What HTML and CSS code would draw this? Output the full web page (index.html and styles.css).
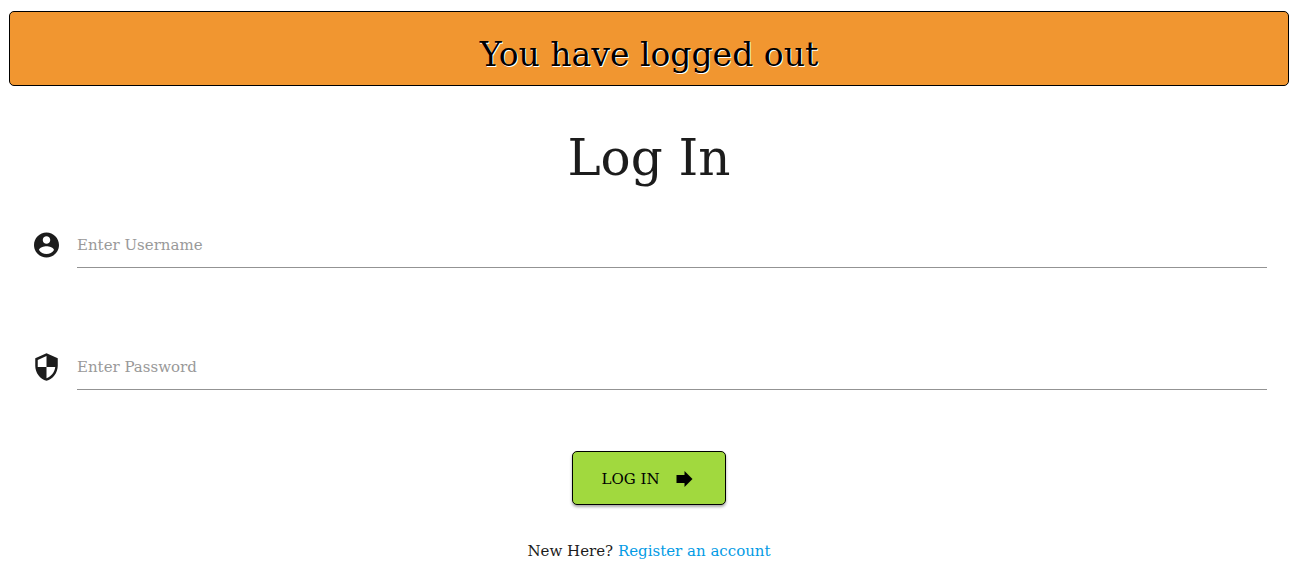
FILE: index.html
```html
<!DOCTYPE html>
<html lang="en">
<head>
  <meta charset="utf-8">
  <meta name="viewport" content="width=device-width, initial-scale=1">
  <title>Log In</title>
  <link rel="stylesheet" href="styles.css">
</head>
<body>
  <div class="flash" role="status">You have logged out</div>
  <main>
    <h1 class="title">Log In</h1>
    <form class="form">
      <div class="field">
        <label for="username" aria-label="Username">
          <svg class="field-icon" viewBox="0 0 24 24" aria-hidden="true"><path d="M12 2C6.48 2 2 6.48 2 12s4.48 10 10 10 10-4.48 10-10S17.52 2 12 2zm0 3c1.66 0 3 1.34 3 3s-1.34 3-3 3-3-1.34-3-3 1.34-3 3-3zm0 14.2c-2.5 0-4.71-1.28-6-3.22.03-1.99 4-3.08 6-3.08 1.99 0 5.97 1.09 6 3.08-1.29 1.94-3.5 3.22-6 3.22z"/></svg>
        </label>
        <input class="field-input" id="username" type="text" placeholder="Enter Username">
      </div>
      <div class="field">
        <label for="password" aria-label="Password">
          <svg class="field-icon" viewBox="0 0 24 24" aria-hidden="true"><path d="M12 1L3 5v6c0 5.55 3.84 10.74 9 12 5.16-1.26 9-6.45 9-12V5l-9-4zm0 10.99h7c-.53 4.12-3.28 7.79-7 8.94V12H5V6.3l7-3.11v8.8z"/></svg>
        </label>
        <input class="field-input" id="password" type="password" placeholder="Enter Password">
      </div>
      <button class="submit" type="button">
        <span>LOG IN</span>
        <svg class="submit-icon" viewBox="0 0 16 16" aria-hidden="true"><path d="M0 4h8V0l8 8-8 8v-4H0z"/></svg>
      </button>
    </form>
    <p class="register">New Here? <a class="link" href="#">Register an account</a></p>
  </main>
</body>
</html>
```

FILE: styles.css
```css
* {
  box-sizing: border-box;
}

body {
  margin: 0;
  padding: 11px 9px 0;
  background: #fff;
  color: #1c1c1c;
  font-family: "DejaVu Serif", serif;
  font-size: 15px;
  line-height: 24px;
}

.flash {
  padding: 19px 16px 6px;
  border: 1px solid #000;
  border-radius: 5px;
  background: #f19630;
  color: #000;
  font-size: 33px;
  line-height: 48px;
  text-align: center;
  text-shadow: 1px 1px 0 #fff;
}

.title {
  margin: 36px 0 0;
  font-size: 50px;
  font-weight: 400;
  line-height: 72px;
  text-align: center;
}

.form {
  display: flex;
  flex-direction: column;
  padding: 28px 22px 0;
}

.field {
  display: flex;
  align-items: center;
  gap: 15px;
  margin-bottom: 76px;
}

.field label {
  display: flex;
}

.field-icon {
  width: 31px;
  height: 30px;
  fill: #1c1c1c;
}

.field-input {
  flex: 1;
  min-width: 0;
  height: 46px;
  padding: 0;
  border: 0;
  border-bottom: 1px solid #939393;
  outline: 0;
  background: transparent;
  color: inherit;
  font: inherit;
}

.field-input::placeholder {
  color: #999;
  opacity: 1;
}

.submit {
  display: flex;
  align-items: center;
  align-self: center;
  gap: 16px;
  margin-top: -15px;
  padding: 15px 32px 13px 28px;
  border: 1px solid #000;
  border-radius: 5px;
  background: #a1d93e;
  box-shadow: 0 2px 3px rgba(0, 0, 0, 0.35);
  color: #000;
  font: inherit;
}

.submit-icon {
  width: 17px;
  height: 16px;
}

.register {
  margin: 34px 0 0;
  text-align: center;
}

.link {
  color: #039be5;
  text-decoration: none;
}
```
